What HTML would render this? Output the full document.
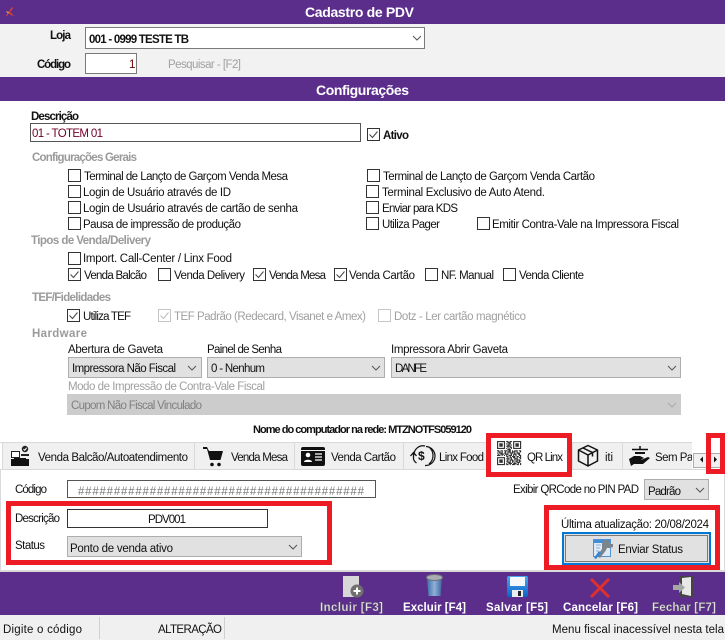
<!DOCTYPE html>
<html lang="pt-BR"><head><meta charset="utf-8"><title>Cadastro de PDV</title>
<style>
html,body{margin:0;padding:0;background:#fff;width:725px;height:640px;overflow:hidden}
svg{display:block}
text{font-family:"Liberation Sans",sans-serif;font-size:11.5px;fill:#111;white-space:pre}
.b{font-weight:bold}
.h{font-weight:bold;font-size:14px;fill:#fff}
.g{font-weight:bold;fill:#9a9a9a}
.d{fill:#a0a0a0}
.t{font-weight:bold;fill:#fff}
.e{font-weight:bold;fill:#e2e2e2;stroke:#666;stroke-width:.35px}
</style></head><body>
<svg width="725" height="640" viewBox="0 0 725 640" xmlns="http://www.w3.org/2000/svg">
<defs>
<g id="cb"><rect x=".5" y=".5" width="12" height="12" fill="#fff" stroke="#333"/></g>
<g id="cc"><rect x=".5" y=".5" width="12" height="12" fill="#fff" stroke="#333"/><path d="M2.500 6.500l3 3 5-6" fill="none" stroke="#444"/></g>
<path id="ch" d="M-4 -2L0 2L4 -2" fill="none" stroke="#555"/>
<clipPath id="tc"><rect x="0" y="440" width="692" height="30"/></clipPath>
<linearGradient id="tr" x1="0" x2="1"><stop offset="0" stop-color="#3f6fa8"/><stop offset=".5" stop-color="#8fb0d8"/><stop offset="1" stop-color="#3a659c"/></linearGradient>
<linearGradient id="fl" x1="0" y1="0" x2="0" y2="1"><stop offset="0" stop-color="#49a6f2"/><stop offset="1" stop-color="#0d63c4"/></linearGradient>
</defs>

<rect width="725" height="640" fill="#fff"/>
<rect width="725" height="24" fill="#5b2e8c"/>
<rect y="24" width="725" height="53" fill="#f2f2f2"/>
<rect y="77" width="725" height="24" fill="#5b2e8c"/>
<rect y="572" width="725" height="43" fill="#5b2e8c"/>
<rect y="615" width="725" height="25" fill="#f0f0f0"/>
<rect y="570" width="725" height="2" fill="#d9d9d9"/>

<path d="M6 16L12 7l1 1-3 4 4 4-3-1-2-2-2 3z" fill="#e8452a"/><path d="M6 11l3 1-1 2z" fill="#f0a030"/>
<text class="h" x="305" y="17" textLength="109">Cadastro de PDV</text>
<text class="h" x="316" y="95" textLength="93">Configurações</text>

<text class="b" x="50" y="39" textLength="21">Loja</text>
<rect x="85.500" y="27.500" width="339" height="21" fill="#fff" stroke="#7a7a7a"/>
<text class="b" x="89" y="43" textLength="100">001 - 0999 TESTE TB</text>
<use href="#ch" x="417" y="38"/>
<text class="b" x="37" y="68" textLength="34">Código</text>
<rect x="85.500" y="53.500" width="51" height="20" fill="#fff" stroke="#7a7a7a"/>
<text x="129" y="68" style="fill:#600">1</text>
<text class="d" x="168" y="68" textLength="73">Pesquisar - [F2]</text>

<text class="b" x="31" y="120" textLength="48">Descrição</text>
<rect x="30.500" y="123.500" width="330" height="18" fill="#fff" stroke="#555"/>
<text x="32" y="137" textLength="71" style="fill:#70002a">01 - TOTEM 01</text>
<use href="#cc" x="367" y="128"/>
<text class="b" x="383" y="139" textLength="26">Ativo</text>

<text class="g" x="32" y="161" textLength="105">Configurações Gerais</text>
<use href="#cb" x="68" y="169"/><text x="84" y="180" textLength="204">Terminal de Lançto de Garçom Venda Mesa</text>
<use href="#cb" x="68" y="185"/><text x="83" y="196" textLength="148">Login de Usuário através de ID</text>
<use href="#cb" x="68" y="201"/><text x="83" y="212" textLength="215">Login de Usuário através de cartão de senha</text>
<use href="#cb" x="68" y="217"/><text x="83" y="228" textLength="158">Pausa de impressão de produção</text>
<use href="#cb" x="367" y="169"/><text x="383" y="180" textLength="212">Terminal de Lançto de Garçom Venda Cartão</text>
<use href="#cb" x="366" y="185"/><text x="382" y="196" textLength="163">Terminal Exclusivo de Auto Atend.</text>
<use href="#cb" x="366" y="201"/><text x="382" y="212" textLength="76">Enviar para KDS</text>
<use href="#cb" x="366" y="217"/><text x="382" y="228" textLength="58">Utiliza Pager</text>
<use href="#cb" x="477" y="217"/><text x="492" y="228" textLength="187">Emitir Contra-Vale na Impressora Fiscal</text>

<text class="g" x="31" y="244" textLength="120">Tipos de Venda/Delivery</text>
<use href="#cb" x="68" y="252"/><text x="83" y="262" textLength="149">Import. Call-Center / Linx Food</text>
<use href="#cc" x="68" y="268"/><text x="84" y="279" textLength="63">Venda Balcão</text>
<use href="#cb" x="158" y="268"/><text x="174" y="279" textLength="71">Venda Delivery</text>
<use href="#cc" x="253" y="268"/><text x="269" y="279" textLength="57">Venda Mesa</text>
<use href="#cc" x="334" y="268"/><text x="349" y="279" textLength="66">Venda Cartão</text>
<use href="#cb" x="425" y="268"/><text x="441" y="279" textLength="53">NF. Manual</text>
<use href="#cb" x="503" y="268"/><text x="519" y="279" textLength="65">Venda Cliente</text>

<text class="g" x="32" y="301" textLength="79">TEF/Fidelidades</text>
<use href="#cc" x="67" y="309"/><text x="83" y="320" textLength="48">Utiliza TEF</text>
<rect x="158.500" y="309.500" width="12" height="12" fill="#fff" stroke="#c4c4c4"/><path d="M160.500 315.500l3 3 5-6" fill="none" stroke="#bbb"/>
<text class="d" x="174" y="320" textLength="192">TEF Padrão (Redecard, Visanet e Amex)</text>
<rect x="378.500" y="309.500" width="12" height="12" fill="#fff" stroke="#c8c8c8"/>
<text class="d" x="394" y="320" textLength="132">Dotz - Ler cartão magnético</text>

<text class="g" x="32" y="337" textLength="55">Hardware</text>
<text x="68" y="353" textLength="95">Abertura de Gaveta</text>
<text x="207" y="353" textLength="75">Painel de Senha</text>
<text x="391" y="353" textLength="117">Impressora Abrir Gaveta</text>
<rect x="68.500" y="357.500" width="133" height="20" fill="#e1e1e1" stroke="#adadad"/>
<text x="72" y="372" textLength="104">Impressora Não Fiscal</text><use href="#ch" x="192" y="368"/>
<rect x="207.500" y="357.500" width="177" height="20" fill="#e1e1e1" stroke="#adadad"/>
<text x="211" y="372" textLength="54">0 - Nenhum</text><use href="#ch" x="376" y="368"/>
<rect x="391.500" y="357.500" width="289" height="20" fill="#e1e1e1" stroke="#adadad"/>
<text x="395" y="372" textLength="32">DANFE</text><use href="#ch" x="672" y="368"/>
<text class="d" x="68" y="390" textLength="197">Modo de Impressão de Contra-Vale Fiscal</text>
<rect x="67" y="394" width="614" height="21" fill="#cccccc"/>
<text x="71" y="409" textLength="131" style="fill:#808080">Cupom Não Fiscal Vinculado</text>
<path d="M668 403L672 407L676 403" fill="none" stroke="#aaa"/>

<text class="b" x="253" y="433" textLength="219" style="font-size:11px">Nome do computador na rede: MTZNOTFS059120</text>

<!-- tabs -->
<rect x="2" y="442" width="690" height="27" fill="#f0f0f0"/>
<path d="M0 442.500H692M0 469.500H725" stroke="#d9d9d9"/>
<path d="M2.500 442V469M194.500 442V469M294.500 442V469M403.500 442V469M572.500 442V469M622.500 442V469" stroke="#d9d9d9"/>
<rect x="487" y="438" width="85" height="33" fill="#fff"/>
<rect x="0" y="470" width="1" height="100" fill="#d9d9d9"/><rect x="724" y="470" width="1" height="100" fill="#d9d9d9"/>

<g clip-path="url(#tc)">
<text x="38" y="461" textLength="150">Venda Balcão/Autoatendimento</text>
<text x="231" y="461" textLength="57">Venda Mesa</text>
<text x="331" y="461" textLength="65">Venda Cartão</text>
<text x="439" y="461" textLength="45">Linx Food</text>
<text x="527" y="461" textLength="36">QR Linx</text>
<text x="605" y="461" textLength="8">iti</text>
<text x="655" y="461" textLength="52">Sem Papel</text>
</g>
<!-- balcao icon -->
<rect x="11.500" y="451.500" width="8" height="6" fill="#fff" stroke="#222"/>
<circle cx="25" cy="449" r="3.200" fill="#222"/><path d="M23.500 449l1.200 1.200 2-2.400" stroke="#fff" fill="none"/>
<path d="M21 454h8v2h-8z" fill="#222"/>
<rect x="11" y="459" width="18" height="7" fill="#111"/><rect x="14" y="458" width="12" height="2" fill="#111"/>
<!-- cart -->
<path d="M203 447h4l2 4h14l-2.500 9H210l-3-11h-4z" fill="#111"/>
<circle cx="212" cy="464.500" r="1.800" fill="#111"/><circle cx="219" cy="464.500" r="1.800" fill="#111"/>
<!-- card -->
<rect x="301" y="447" width="24" height="19" rx="2" fill="#111"/>
<rect x="301" y="450" width="24" height="1" fill="#f0f0f0"/>
<circle cx="308" cy="455" r="2.300" fill="#fff"/><path d="M304 462c0-3 8-3 8 0z" fill="#fff"/>
<path d="M315 454h7M315 457h7M315 460h7" stroke="#fff" stroke-width="1.300"/>
<!-- linx food -->
<path d="M414 455a9 9 0 0 1 11-9M425 465.500a9.500 9.500 0 0 0 1-19M429 464a11 11 0 0 0 0-17" fill="none" stroke="#111" stroke-width="1.200"/>
<path d="M410.500 456l3-3.500 3 3.500M413.500 453v6a7 7 0 0 0 3 4" fill="none" stroke="#111" stroke-width="1.300"/>
<text x="418" y="460" class="b" style="font-size:12px">$</text>
<!-- qr -->
<g transform="translate(497 441) scale(1.150)" fill="none" stroke="#333" stroke-width="1">
<path d="M0 .5h7M8 .5h2M11 .5h2M14 .5h7M0 1.500h1M6 1.500h1M9 1.500h3M14 1.500h1M20 1.500h1M0 2.500h1M2 2.500h3M6 2.500h1M8 2.500h1M10 2.500h2M14 2.500h1M16 2.500h3M20 2.500h1M0 3.500h1M2 3.500h3M6 3.500h1M9 3.500h2M12 3.500h1M14 3.500h1M16 3.500h3M20 3.500h1M0 4.500h1M2 4.500h3M6 4.500h1M8 4.500h4M14 4.500h1M16 4.500h3M20 4.500h1M0 5.500h1M6 5.500h1M9 5.500h1M11 5.500h2M14 5.500h1M20 5.500h1M0 6.500h7M8 6.500h1M10 6.500h1M12 6.500h1M14 6.500h7M9 7.500h3M0 8.500h2M3 8.500h2M6 8.500h3M10 8.500h2M13 8.500h1M15 8.500h3M19 8.500h2M1 9.500h2M4 9.500h1M7 9.500h1M9 9.500h3M13 9.500h3M17 9.500h1M20 9.500h1M0 10.500h1M2 10.500h3M6 10.500h2M9 10.500h1M11 10.500h3M15 10.500h1M17 10.500h3M1 11.500h1M3 11.500h3M7 11.500h3M12 11.500h1M14 11.500h3M18 11.500h2M0 12.500h3M4 12.500h1M6 12.500h1M8 12.500h1M10 12.500h3M14 12.500h1M16 12.500h1M19 12.500h2M8 13.500h2M11 13.500h1M13 13.500h3M17 13.500h2M20 13.500h1M0 14.500h7M9 14.500h1M11 14.500h2M14 14.500h2M17 14.500h1M19 14.500h2M0 15.500h1M6 15.500h1M8 15.500h3M12 15.500h1M15 15.500h3M20 15.500h1M0 16.500h1M2 16.500h3M6 16.500h1M9 16.500h1M11 16.500h3M15 16.500h1M17 16.500h3M0 17.500h1M2 17.500h3M6 17.500h1M8 17.500h2M11 17.500h1M13 17.500h2M16 17.500h2M19 17.500h2M0 18.500h1M2 18.500h3M6 18.500h1M9 18.500h3M13 18.500h1M15 18.500h1M17 18.500h3M0 19.500h1M6 19.500h1M8 19.500h1M10 19.500h3M14 19.500h3M18 19.500h1M20 19.500h1M0 20.500h7M8 20.500h2M11 20.500h1M13 20.500h3M17 20.500h2M20 20.500h1"/>
</g>
<!-- box -->
<path d="M588 445.500l9.500 4.500v11l-9.500 5-9.500-5v-11zM578.500 450l9.500 5 9.500-5M588 455v11M583 448l9.500 4.500v4" fill="none" stroke="#111" stroke-width="1.500" stroke-linejoin="round"/>
<!-- hand -->
<path d="M632 449.500h16M640 446v3" stroke="#111" stroke-width="1.500"/>
<path d="M635 452h10v2h-10z" fill="#111"/>
<path d="M629 459l5-3h6l4 2-3 1.500h-4h5l6-2.500 2 1-7 6h-9l-3 2z" fill="#111"/>
<!-- spin -->
<rect x="693.500" y="453.500" width="13" height="14" fill="#f0f0f0" stroke="#adadad"/>
<rect x="709.500" y="453.500" width="11" height="14" fill="#f0f0f0" stroke="#adadad"/>
<path d="M703 456.500v6l-3-3zM714 456.500v6l3-3z" fill="#111"/>

<!-- panel -->
<text x="15" y="493" textLength="32">Código</text>
<rect x="67.500" y="480.500" width="308" height="17" fill="#fff" stroke="#555"/>
<text x="78" y="495" textLength="286" style="fill:#777">########################################</text>
<text x="513" y="493" textLength="126">Exibir QRCode no PIN PAD</text>
<rect x="644.500" y="479.500" width="64" height="20" fill="#e1e1e1" stroke="#adadad"/>
<text x="648" y="495" textLength="33">Padrão</text><use href="#ch" x="700" y="490"/>

<text x="15" y="522" textLength="45">Descrição</text>
<rect x="67.500" y="509.500" width="200" height="18" fill="#fff" stroke="#333"/>
<text x="148" y="523" textLength="38">PDV001</text>
<text x="15" y="549" textLength="30">Status</text>
<rect x="67.500" y="536.500" width="234" height="20" fill="#e1e1e1" stroke="#adadad"/>
<text x="70" y="552" textLength="103">Ponto de venda ativo</text><use href="#ch" x="293" y="547"/>

<text x="561" y="528" textLength="148">Última atualização: 20/08/2024</text>
<rect x="563" y="533" width="147" height="31" fill="#e1e1e1" stroke="#0078d7" stroke-width="2"/>
<rect x="565.500" y="535.500" width="142" height="26" fill="none" stroke="#111" stroke-dasharray="1 1"/>
<rect x="593.500" y="539.500" width="17" height="17" fill="#dfeaf6" stroke="#4f93d2"/>
<rect x="594" y="540" width="16" height="3" fill="#3f8fd8"/>
<path d="M596 545h5M596 548h4M596 551h3" stroke="#a9c4e2" stroke-width="1.500"/>
<path d="M602 544a4 4 0 0 1 8 0l3 0v3l-3 1h-3l-1.500 3-5.500 7-3-2 5-7z" fill="#7d858c"/>
<path d="M594 558l5-7 2 2-5 6z" fill="#2f86d6"/>
<text x="618" y="553" textLength="65">Enviar Status</text>

<!-- red highlights -->
<g fill="none" stroke="#ed1c24" stroke-width="5">
<rect x="8.500" y="503.500" width="321" height="59"/>
<rect x="488.500" y="435.500" width="81" height="39"/>
<rect x="708.500" y="435.500" width="14" height="36"/>
<rect x="546.500" y="507.500" width="171" height="60"/>
</g>

<!-- toolbar -->
<path d="M343 576h16v21h-16z" fill="#d8d8d8"/>
<circle cx="357" cy="591" r="6.500" fill="#6f6f6f"/><path d="M353.500 591h7M357 587.500v7" stroke="#fff" stroke-width="2"/>
<text class="e" x="320" y="611" textLength="63">Incluir [F3]</text>
<path d="M427 578h15l-1.500 18h-12z" fill="url(#tr)"/><ellipse cx="434.500" cy="577.500" rx="8" ry="3" fill="#a8adb3" stroke="#6b7076"/>
<text class="t" x="403" y="611" textLength="63">Excluir [F4]</text>
<rect x="507" y="576" width="21" height="21" rx="2" fill="url(#fl)"/><rect x="510" y="577" width="15" height="9" fill="#f4f8fc"/><rect x="512" y="590" width="11" height="7" fill="#e9edf1"/><rect x="518" y="591" width="3" height="5" fill="#222"/>
<text class="t" x="486" y="611" textLength="62">Salvar [F5]</text>
<path d="M591 579l18 18M609 579l-18 18" stroke="#e0302c" stroke-width="3"/>
<text class="t" x="563" y="611" textLength="75">Cancelar [F6]</text>
<path d="M680 576h13v21h-13z" fill="#444"/><path d="M682 578l9-1v19l-9-2z" fill="#e8e8e8"/><path d="M673 585h6v-3l6 5.500-6 5.500v-3h-6z" fill="#a4a8a4"/>
<text class="e" x="652" y="611" textLength="64">Fechar [F7]</text>

<!-- status bar -->
<text x="3" y="633" textLength="79">Digite o código</text>
<rect x="99" y="617" width="1" height="22" fill="#d0d0d0"/>
<text x="158" y="633" textLength="64">ALTERAÇÃO</text>
<rect x="224" y="617" width="1" height="22" fill="#d0d0d0"/>
<text x="552" y="633" textLength="172">Menu fiscal inacessível nesta tela</text>
</svg>
</body></html>
